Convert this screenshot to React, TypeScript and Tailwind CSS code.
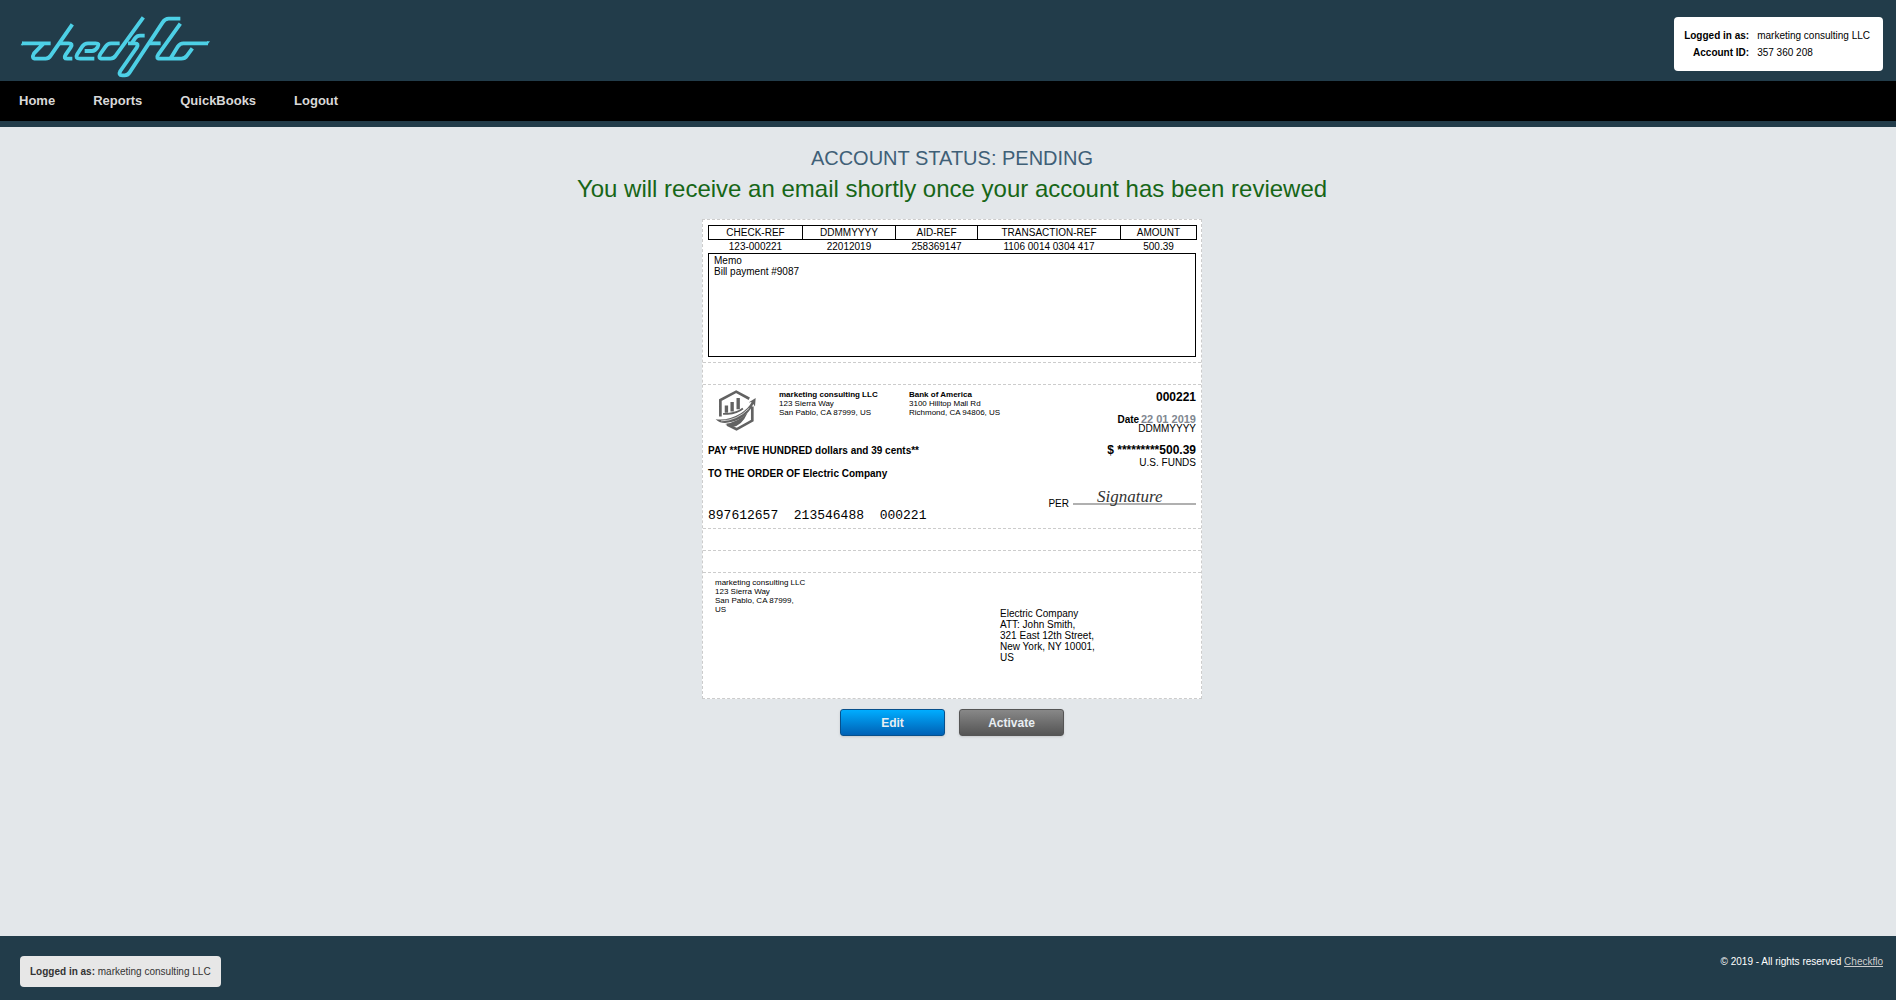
import type { ReactNode } from "react"

const columns = [
  { label: "CHECK-REF", value: "123-000221", width: "w-[94px]" },
  { label: "DDMMYYYY", value: "22012019", width: "w-[93px]" },
  { label: "AID-REF", value: "258369147", width: "w-[82px]" },
  { label: "TRANSACTION-REF", value: "1106 0014 0304 417", width: "w-[143px]" },
  { label: "AMOUNT", value: "500.39", width: "w-[76px]" },
]

const navLinks = ["Home", "Reports", "QuickBooks", "Logout"]

function Logo() {
  return (
    <svg
      viewBox="60 48 573 186"
      className="h-[62px] w-[191px]"
      fill="none"
      stroke="#4dd0e6"
      strokeWidth="11.5"
      strokeLinejoin="round"
      role="img"
      aria-label="checkflo"
    >
      <path d="M66 130H152M131 130L102 160Q93 176 108 176H137Q146 176 152 167L217 73" />
      <path d="M177 130H206Q220 130 212 142L197 164Q189 176 202 176H217" />
      <path d="M283 176H240Q224 176 232 162L247 139Q253 130 264 130H287Q300 130 293 141Q286 153 276 153H254" />
      <path d="M359 130H333Q323 130 317 139L301 162Q293 176 307 176H331Q341 176 347 167L430 52" />
      <path d="M434 107H420Q411 107 405 115L395 130M384 130H404Q418 130 410 143L361 213Q354 226 367 226H374Q383 226 389 217L488 67Q495 56 506 56H541" />
      <path d="M449 130H482" />
      <path d="M541 71L475 163Q466 176 481 176H544Q555 176 561 167L577 145" />
      <path d="M511 176L534 139Q540 130 550 130H624" />
      <path d="M62 136L69 124V136ZM621 124H630L621 136Z" fill="#4dd0e6" stroke="none" />
    </svg>
  )
}

function CompanyMark() {
  return (
    <svg viewBox="62 121 122 122" className="h-[41px] w-[41px]" fill="none" stroke="#626262" aria-hidden="true">
      <path d="M78 200V151L125 126L164 147M173 170V212L126 238L98 224" strokeWidth="8" />
      <path d="M96 189V167M113 185V157M131 178V145" strokeWidth="10" />
      <path d="M86 192H100Q128 190 145 176" strokeWidth="5" />
      <path
        d="M64 208Q101 213 139 190Q163 175 171 157L162 158L183 145L181 170L176 163Q163 192 138 206Q101 224 77 217Q70 214 64 208Z"
        fill="#626262"
        stroke="none"
      />
      <path d="M92 222Q130 217 159 189Q142 228 114 231Z" fill="#626262" stroke="none" />
      <path d="M80 213Q128 212 164 175" stroke="#fff" strokeWidth="2" />
    </svg>
  )
}

function Perforation() {
  return <div className="h-[22px] border-b border-dashed border-[#ccc]" />
}

function ActionButton({ className, children }: { className: string; children: ReactNode }) {
  return (
    <button
      type="button"
      className={`h-[27px] w-[105px] rounded-[3px] border text-xs font-bold text-[#e8eef2] shadow-sm ${className}`}
    >
      {children}
    </button>
  )
}

function Stub() {
  return (
    <section className="border-b border-dashed border-[#ccc] px-[5px] pt-[5px] pb-[5px]">
      <table className="w-full table-fixed border-collapse text-[10px] leading-[13px]">
        <thead>
          <tr>
            {columns.map((c) => (
              <th key={c.label} scope="col" className={`border border-black p-0 font-normal ${c.width}`}>
                {c.label}
              </th>
            ))}
          </tr>
        </thead>
        <tbody>
          <tr>
            {columns.map((c) => (
              <td key={c.label} className="p-0 text-center">
                {c.value}
              </td>
            ))}
          </tr>
        </tbody>
      </table>
      <div className="h-[104px] border border-black px-[5px] py-px text-[10px] leading-[11px]">
        <p>Memo</p>
        <p>Bill payment #9087</p>
      </div>
    </section>
  )
}

function Check() {
  return (
    <section className="flex h-[144px] justify-between border-b border-dashed border-[#ccc] px-[5px] pt-[5px] pb-[3px]">
      <div className="flex flex-col">
        <div className="flex text-[8px] leading-[9px]">
          <div className="w-[71px] pl-[7px]">
            <CompanyMark />
          </div>
          <div className="w-[130px]">
            <p className="font-bold">marketing consulting LLC</p>
            <p>123 Sierra Way</p>
            <p>San Pablo, CA 87999, US</p>
          </div>
          <div>
            <p className="font-bold">Bank of America</p>
            <p>3100 Hilltop Mall Rd</p>
            <p>Richmond, CA 94806, US</p>
          </div>
        </div>
        <p className="mt-[14px] text-[10px] leading-[11px] font-bold">PAY **FIVE HUNDRED dollars and 39 cents**</p>
        <p className="mt-3 text-[10px] leading-[11px] font-bold">TO THE ORDER OF Electric Company</p>
        <p className="mt-auto font-['Liberation_Mono',monospace] text-[13px] leading-[18px] whitespace-pre">
          {"897612657  213546488  000221"}
        </p>
      </div>
      <div className="flex flex-col items-end">
        <p className="text-xs leading-[14px] font-bold">000221</p>
        <p className="mt-2 text-[10px] leading-[14px] font-bold">
          Date <span className="-ml-px text-[11px] text-[#808790]">22 01 2019</span>
        </p>
        <p className="text-[10px] leading-[4px]">DDMMYYYY</p>
        <p className="mt-3 text-xs leading-[14px] font-bold">$ *********500.39</p>
        <p className="text-[10px] leading-[12px]">U.S. FUNDS</p>
        <div className="mt-[26px] flex items-center gap-1 text-[10px] leading-[18px]">
          <span>PER</span>
          <div className="relative h-[2px] w-[123px] bg-[#b0b0b0]">
            <span className="absolute bottom-[-4px] left-6 font-['Liberation_Serif',serif] text-[17px] leading-6 text-[#333] italic">
              Signature
            </span>
          </div>
        </div>
      </div>
    </section>
  )
}

function Envelope() {
  return (
    <section className="flex h-[125px]">
      <div className="w-[285px] pt-[5px] pl-3 text-[8px] leading-[9px]">
        <p>marketing consulting LLC</p>
        <p>123 Sierra Way</p>
        <p>San Pablo, CA 87999,</p>
        <p>US</p>
      </div>
      <div className="pt-[35px] pl-3 text-[10px] leading-[11px]">
        <p>Electric Company</p>
        <p>ATT: John Smith,</p>
        <p>321 East 12th Street,</p>
        <p>New York, NY 10001,</p>
        <p>US</p>
      </div>
    </section>
  )
}

export default function App() {
  return (
    <div className="flex min-h-screen flex-col bg-[#e3e7ea] font-['Liberation_Sans',Arial,sans-serif] text-black">
      <header className="border-b-[6px] border-[#223c4a] bg-[#223c4a]">
        <div className="flex h-[81px] items-start justify-between pt-4 pr-[13px] pl-5">
          <a href="#home">
            <Logo />
          </a>
          <dl className="mt-px grid h-[54px] grid-cols-[auto_auto] content-center gap-x-2 rounded bg-white pr-[13px] pl-[10px] text-[10px] leading-[17px]">
            <dt className="text-right font-bold">Logged in as:</dt>
            <dd>marketing consulting LLC</dd>
            <dt className="text-right font-bold">Account ID:</dt>
            <dd>357 360 208</dd>
          </dl>
        </div>
        <nav className="flex h-10 items-center gap-[38px] bg-black pl-[19px] text-[13px] font-bold text-[#d8d8d8]">
          {navLinks.map((link) => (
            <a key={link} href={`#${link.toLowerCase()}`}>
              {link}
            </a>
          ))}
        </nav>
      </header>

      <main className="flex flex-1 flex-col items-center pt-4 pl-2">
        <h1 className="text-xl leading-[30px] text-[#3f6077]">ACCOUNT STATUS: PENDING</h1>
        <h2 className="text-2xl leading-8 text-[#176617]">
          You will receive an email shortly once your account has been reviewed
        </h2>
        <div className="mt-[14px] w-[500px] border border-dashed border-[#ccc] bg-white">
          <Stub />
          <Perforation />
          <Check />
          <Perforation />
          <Perforation />
          <Envelope />
        </div>
        <div className="mt-[10px] flex gap-[14px]">
          <ActionButton className="border-[#07508c] bg-linear-to-b from-[#00adff] to-[#0061b5]">Edit</ActionButton>
          <ActionButton className="border-[#555] bg-linear-to-b from-[#888] to-[#555]">Activate</ActionButton>
        </div>
      </main>

      <footer className="flex h-16 items-start justify-between bg-[#223c4a] pt-5 pr-[13px] pl-5 text-[10px]">
        <p className="rounded bg-[#e7e7e7] px-[10px] py-2 leading-[15px] text-[#333]">
          <b>Logged in as:</b> marketing consulting LLC
        </p>
        <p className="leading-3 text-white">
          © 2019 - All rights reserved{" "}
          <a href="#checkflo" className="text-[#ccc] underline">
            Checkflo
          </a>
        </p>
      </footer>
    </div>
  )
}
